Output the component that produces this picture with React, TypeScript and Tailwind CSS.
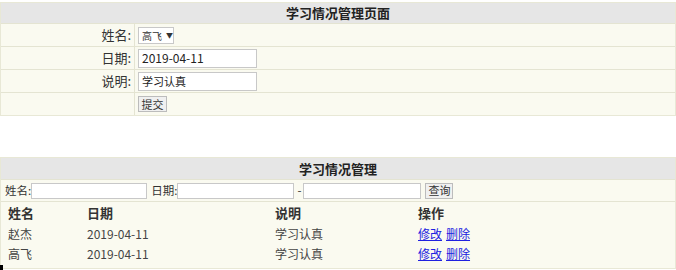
import React from 'react';

const font = { fontFamily: '"Noto Sans CJK SC", "Noto Sans", sans-serif' };

function FormRow({ label, children }: { label: string; children?: React.ReactNode }) {
  return (
    <div className="grid grid-cols-[134px_1fr] h-[23px] border-t border-[#e4e4d2]">
      <div className="flex items-center justify-end pr-[3px] border-r border-[#e4e4d2] text-[13px] text-[#333]">
        {label}
      </div>
      <div className="flex items-center pl-[3px]">{children}</div>
    </div>
  );
}

const records = [
  { name: '赵杰', date: '2019-04-11', note: '学习认真' },
  { name: '高飞', date: '2019-04-11', note: '学习认真' },
];

export default function App() {
  return (
    <div className="w-[676px] h-[270px] bg-white relative overflow-hidden" style={font}>
      {/* 编辑表单 */}
      <div className="mt-[2px] border border-[#e8e8d6] bg-[#fafaf0]">
        <div className="h-[20px] bg-[#e6e6e6] flex items-center justify-center text-[13px] font-bold text-[#222]">
          学习情况管理页面
        </div>
        <FormRow label="姓名:">
          <div className="h-[17px] w-[36px] border border-[#c8c8c8] bg-white flex items-center pl-[3px] text-[10px] text-[#333] whitespace-nowrap">
            高飞<span className="ml-[4px] text-[7px]">▼</span>
          </div>
        </FormRow>
        <FormRow label="日期:">
          <div className="h-[19px] w-[119px] border border-[#c8c8c8] bg-white flex items-center pl-[3px] text-[12px] text-[#222]">
            2019-04-11
          </div>
        </FormRow>
        <FormRow label="说明:">
          <div className="h-[19px] w-[119px] border border-[#c8c8c8] bg-white flex items-center pl-[3px] text-[11px] text-[#222]">
            学习认真
          </div>
        </FormRow>
        <FormRow label="">
          <button className="h-[16px] w-[29px] border border-[#bcbcbc] bg-[#f0f0f0] text-[11px] text-[#333] leading-none">
            提交
          </button>
        </FormRow>
      </div>

      {/* 列表 */}
      <div className="mt-[41px] border border-[#e8e8d6] bg-[#fafaf0]">
        <div className="h-[21px] bg-[#e6e6e6] flex items-center justify-center text-[13px] font-bold text-[#222]">
          学习情况管理
        </div>
        <div className="h-[22px] border-t border-[#e4e4d2] flex items-center pl-[4px] text-[11.5px] text-[#333]">
          <span>姓名:</span>
          <div className="h-[16px] w-[116px] border border-[#c8c8c8] bg-white" />
          <span className="ml-[4px]">日期:</span>
          <div className="h-[16px] w-[117px] border border-[#c8c8c8] bg-white" />
          <span className="ml-[3px] mr-[2px]">-</span>
          <div className="h-[16px] w-[118px] border border-[#c8c8c8] bg-white" />
          <button className="ml-[4px] h-[16px] w-[28px] border border-[#bcbcbc] bg-[#f0f0f0] text-[11px] text-[#333] leading-none">
            查询
          </button>
        </div>
        <div className="border-t border-[#e4e4d2] pb-[4px]">
          <div className="grid grid-cols-[79px_188px_143px_1fr] h-[22px] items-center pl-[7px] text-[13px] font-bold text-[#333]">
            <span>姓名</span>
            <span>日期</span>
            <span>说明</span>
            <span>操作</span>
          </div>
          {records.map((r, i) => (
            <div
              key={i}
              className="grid grid-cols-[79px_188px_143px_1fr] h-[20px] items-center pl-[7px] text-[12px] text-[#444]"
            >
              <span>{r.name}</span>
              <span>{r.date}</span>
              <span>{r.note}</span>
              <span className="flex gap-[4px]">
                <a className="text-[#2020e0] underline">修改</a>
                <a className="text-[#2020e0] underline">删除</a>
              </span>
            </div>
          ))}
        </div>
      </div>

      <div className="absolute left-0 bottom-0 w-[3px] h-[5px] bg-black" />
    </div>
  );
}
